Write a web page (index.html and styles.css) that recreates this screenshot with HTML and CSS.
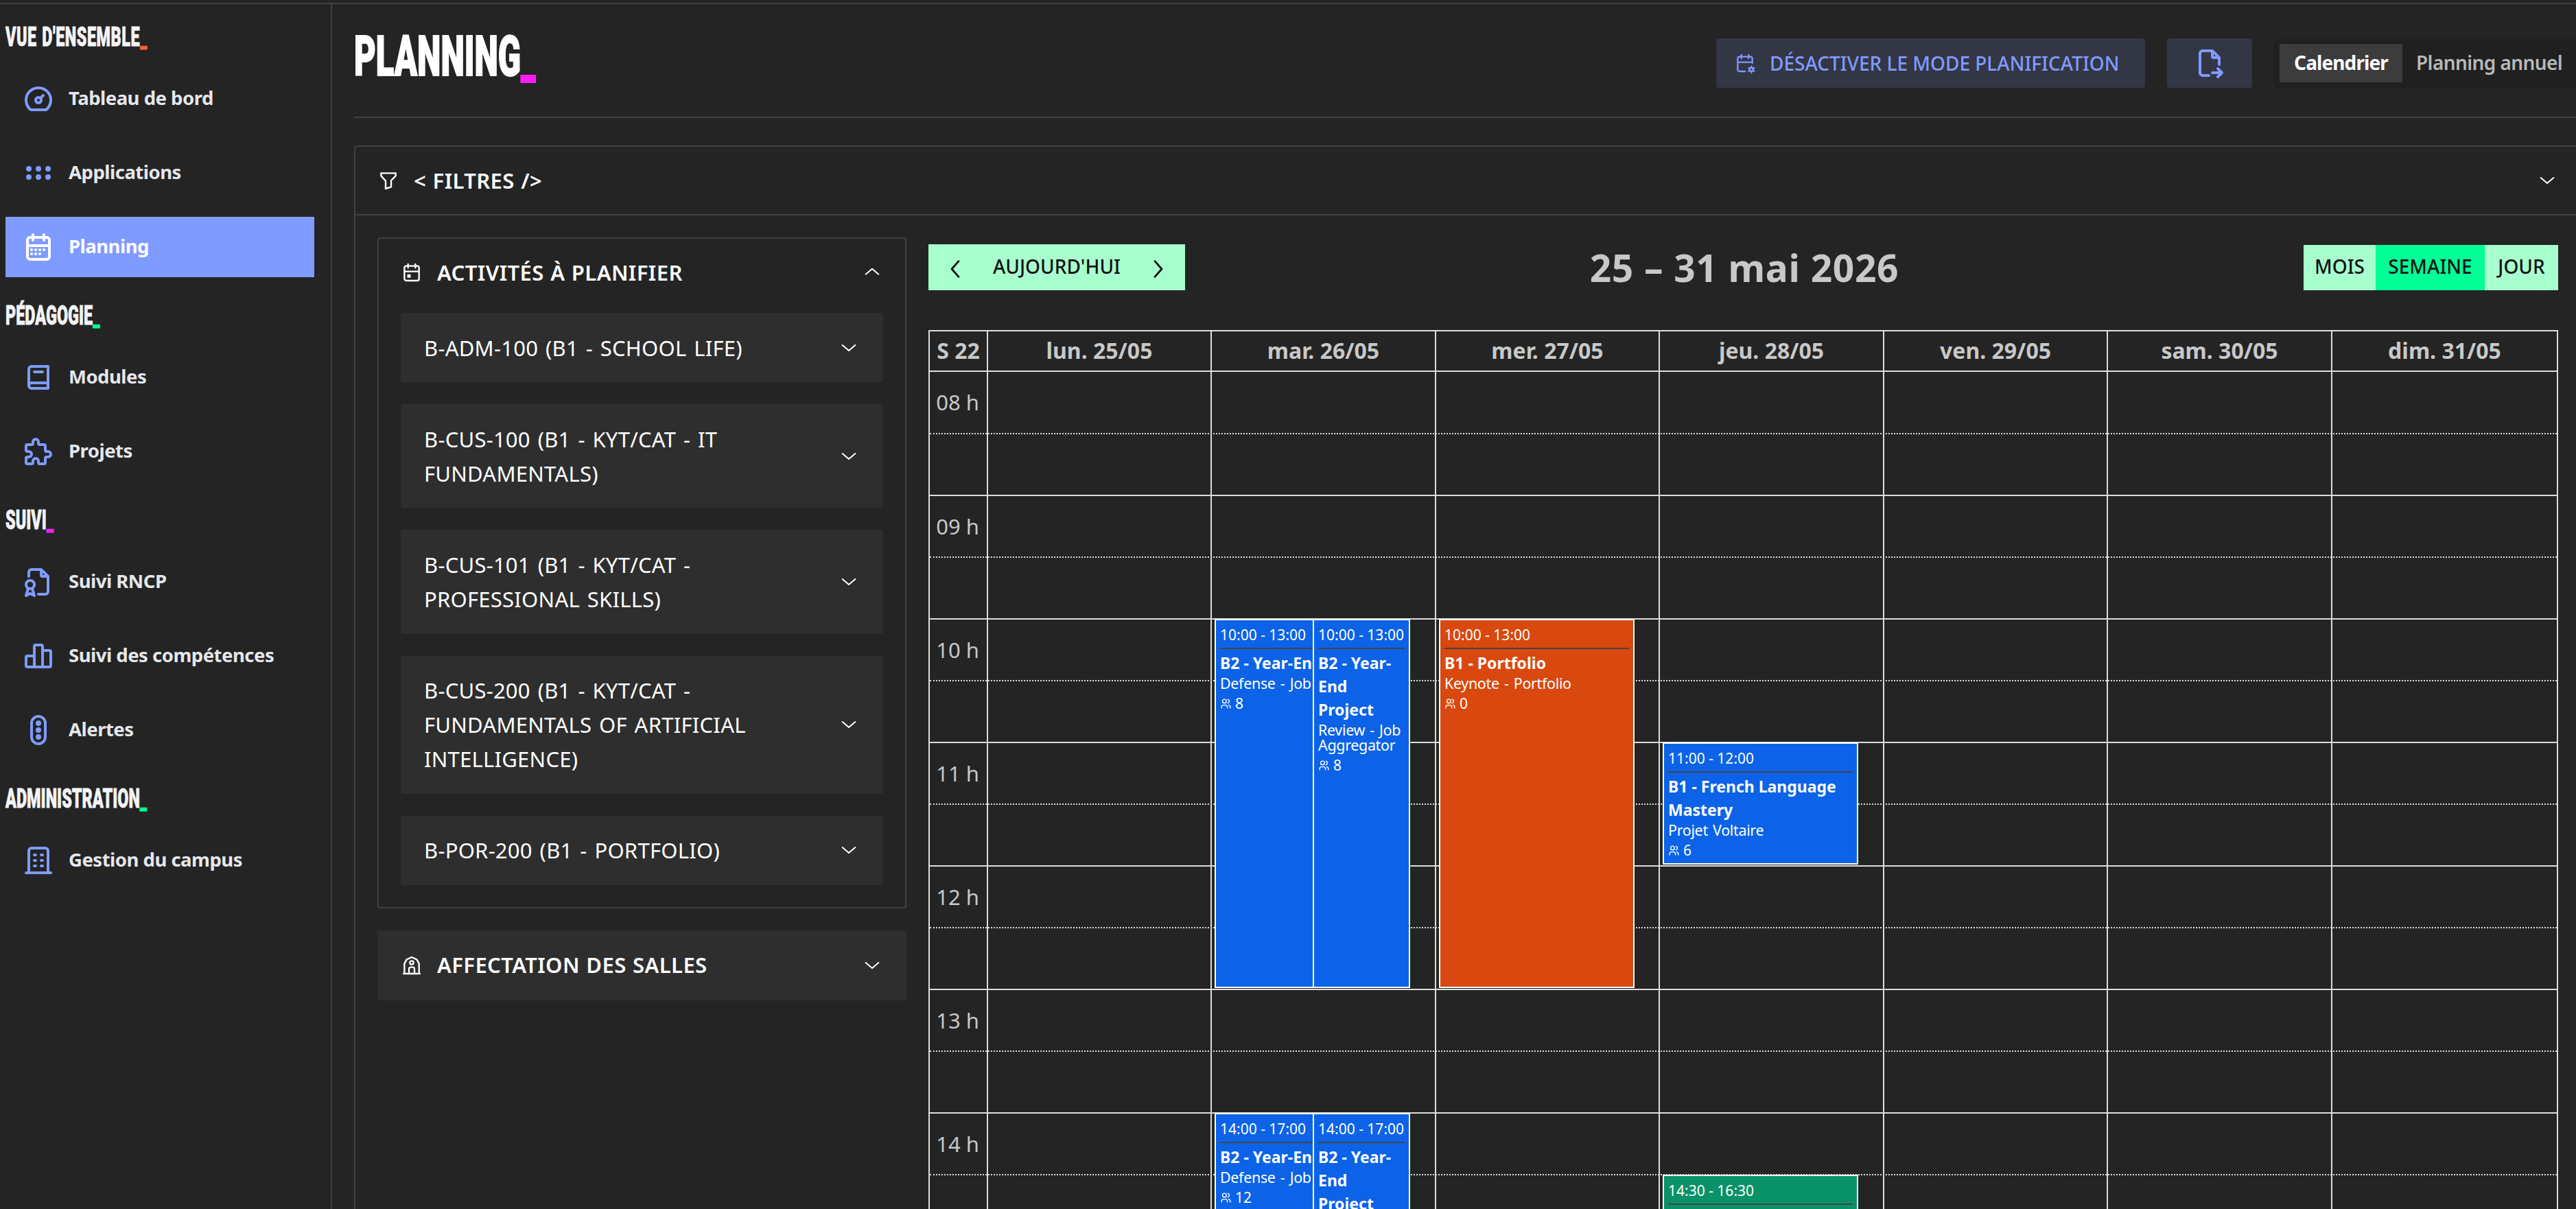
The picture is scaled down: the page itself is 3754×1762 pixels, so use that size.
FILE: index.html
```html
<!DOCTYPE html>
<html lang="fr">
<head>
  <meta charset="UTF-8">
  <title>Planning</title>
  <link rel="stylesheet" href="styles.css">
</head>
<body>
  <!-- Icons -->
  <svg class="sprite">
    <symbol id="i-dashboard" viewBox="0 0 24 24"><circle cx="12" cy="13" r="2"/><path d="M13.45 11.55l2.05-2.05M6.4 20a9 9 0 1 1 11.2 0z"/></symbol>
    <symbol id="i-apps" viewBox="0 0 24 24"><circle cx="5" cy="9" r="1"/><circle cx="5" cy="15" r="1"/><circle cx="12" cy="9" r="1"/><circle cx="12" cy="15" r="1"/><circle cx="19" cy="9" r="1"/><circle cx="19" cy="15" r="1"/></symbol>
    <symbol id="i-month" viewBox="0 0 24 24"><path d="M4 7a2 2 0 0 1 2-2h12a2 2 0 0 1 2 2v12a2 2 0 0 1-2 2H6a2 2 0 0 1-2-2zM16 3v4M8 3v4M4 11h16M7 14h.01M10 14h.01M13 14h.01M16 14h.01M13 17h.01M7 17h.01M10 17h.01"/></symbol>
    <symbol id="i-book" viewBox="0 0 24 24"><path d="M19 4v16H7a2 2 0 0 1-2-2V6a2 2 0 0 1 2-2zM19 16H7a2 2 0 0 0-2 2M9 8h6"/></symbol>
    <symbol id="i-puzzle" viewBox="0 0 24 24"><path d="M4 7h3a1 1 0 0 0 1-1v-1a2 2 0 0 1 4 0v1a1 1 0 0 0 1 1h3a1 1 0 0 1 1 1v3a1 1 0 0 0 1 1h1a2 2 0 0 1 0 4h-1a1 1 0 0 0-1 1v3a1 1 0 0 1-1 1h-3a1 1 0 0 1-1-1v-1a2 2 0 0 0-4 0v1a1 1 0 0 1-1 1H4a1 1 0 0 1-1-1v-3a1 1 0 0 1 1-1h1a2 2 0 0 0 0-4H4a1 1 0 0 1-1-1V8a1 1 0 0 1 1-1"/></symbol>
    <symbol id="i-certificate" viewBox="0 0 24 24"><path d="M14 3v4a1 1 0 0 0 1 1h4M5 8V5a2 2 0 0 1 2-2h7l5 5v11a2 2 0 0 1-2 2h-5M4.500 17L3 22l3-1.500l3 1.500-1.500-5"/><circle cx="6" cy="14" r="3"/></symbol>
    <symbol id="i-chart" viewBox="0 0 24 24"><path d="M3 13a1 1 0 0 1 1-1h4a1 1 0 0 1 1 1v6a1 1 0 0 1-1 1H4a1 1 0 0 1-1-1zM15 9a1 1 0 0 1 1-1h4a1 1 0 0 1 1 1v10a1 1 0 0 1-1 1h-4a1 1 0 0 1-1-1zM9 5a1 1 0 0 1 1-1h4a1 1 0 0 1 1 1v14a1 1 0 0 1-1 1h-4a1 1 0 0 1-1-1zM4 20h14"/></symbol>
    <symbol id="i-lights" viewBox="0 0 24 24"><path d="M7 7a5 5 0 0 1 10 0v10a5 5 0 0 1-10 0z"/><circle cx="12" cy="7" r="1"/><circle cx="12" cy="12" r="1"/><circle cx="12" cy="17" r="1"/></symbol>
    <symbol id="i-building" viewBox="0 0 24 24"><path d="M3 21h18M9 8h1M9 12h1M9 16h1M14 8h1M14 12h1M14 16h1M5 21V5a2 2 0 0 1 2-2h10a2 2 0 0 1 2 2v16"/></symbol>
    <symbol id="i-calcog" viewBox="0 0 24 24"><path d="M12 21H6a2 2 0 0 1-2-2V7a2 2 0 0 1 2-2h12a2 2 0 0 1 2 2v5M16 3v4M8 3v4M4 11h16M19 15.500v1.500M19 21v1.500M22.030 17.250l-1.300.750M17.270 20l-1.300.750M15.970 17.250l1.300.750M20.730 20l1.300.750"/><circle cx="19" cy="19" r="2"/></symbol>
    <symbol id="i-export" viewBox="0 0 24 24"><path d="M14 3v4a1 1 0 0 0 1 1h4M11.500 21H7a2 2 0 0 1-2-2V5a2 2 0 0 1 2-2h7l5 5v5M14 19h7M18 16l3 3-3 3"/></symbol>
    <symbol id="i-filter" viewBox="0 0 24 24"><path d="M4 4h16v2.172a2 2 0 0 1-.586 1.414L15 12v7l-6 2v-8.500L4.520 7.572A2 2 0 0 1 4 6.227z"/></symbol>
    <symbol id="i-event" viewBox="0 0 24 24"><path d="M4 7a2 2 0 0 1 2-2h12a2 2 0 0 1 2 2v12a2 2 0 0 1-2 2H6a2 2 0 0 1-2-2zM16 3v4M8 3v4M4 11h16M8 15h2v2H8z"/></symbol>
    <symbol id="i-cottage" viewBox="0 0 24 24"><path d="M3 21h18M4 21V10l2.500-4.500L12 3l5.500 2.500L20 10v11M9 21v-5a2 2 0 0 1 2-2h2a2 2 0 0 1 2 2v5"/><circle cx="12" cy="9" r="2"/></symbol>
    <symbol id="i-users" viewBox="0 0 24 24"><circle cx="9" cy="7" r="4"/><path d="M3 21v-2a4 4 0 0 1 4-4h4a4 4 0 0 1 4 4v2M16 3.130a4 4 0 0 1 0 7.750M21 21v-2a4 4 0 0 0-3-3.850"/></symbol>
    <symbol id="i-down" viewBox="0 0 24 24"><path d="M5 9l7 6 7-6"/></symbol>
    <symbol id="i-up" viewBox="0 0 24 24"><path d="M5 14l7-6 7 6"/></symbol>
    <symbol id="i-left" viewBox="0 0 24 24"><path d="M15.500 4l-7 8 7 8"/></symbol>
    <symbol id="i-right" viewBox="0 0 24 24"><path d="M8.500 4l7 8-7 8"/></symbol>
  </svg>

  <div class="app">
    <aside class="sidebar">
      <h3 class="nav-title"><span class="spaced">VUE D'ENSEMBLE<i class="orange">_</i></span></h3>
      <nav class="nav">
        <a class="nav-item"><svg><use href="#i-dashboard"/></svg><span>Tableau de bord</span></a>
        <a class="nav-item"><svg><use href="#i-apps"/></svg><span>Applications</span></a>
        <a class="nav-item active"><svg><use href="#i-month"/></svg><span>Planning</span></a>
      </nav>
      <h3 class="nav-title"><span>PÉDAGOGIE<i class="green">_</i></span></h3>
      <nav class="nav">
        <a class="nav-item"><svg><use href="#i-book"/></svg><span>Modules</span></a>
        <a class="nav-item"><svg><use href="#i-puzzle"/></svg><span>Projets</span></a>
      </nav>
      <h3 class="nav-title"><span>SUIVI<i class="pink">_</i></span></h3>
      <nav class="nav">
        <a class="nav-item"><svg><use href="#i-certificate"/></svg><span>Suivi RNCP</span></a>
        <a class="nav-item"><svg><use href="#i-chart"/></svg><span>Suivi des compétences</span></a>
        <a class="nav-item"><svg><use href="#i-lights"/></svg><span>Alertes</span></a>
      </nav>
      <h3 class="nav-title"><span>ADMINISTRATION<i class="green">_</i></span></h3>
      <nav class="nav">
        <a class="nav-item"><svg><use href="#i-building"/></svg><span>Gestion du campus</span></a>
      </nav>
    </aside>

    <main class="main">
      <header class="page-header">
        <h1><span>PLANNING<i class="pink">_</i></span></h1>
        <div class="actions">
          <button class="btn btn-plan"><svg><use href="#i-calcog"/></svg><span>DÉSACTIVER LE MODE PLANIFICATION</span></button>
          <button class="btn btn-export"><svg><use href="#i-export"/></svg></button>
          <div class="switch">
            <span class="switch-item on">Calendrier</span>
            <span class="switch-item">Planning annuel</span>
          </div>
        </div>
      </header>

      <section class="panel">
        <div class="filters">
          <svg class="icon"><use href="#i-filter"/></svg>
          <span class="panel-label">&lt; FILTRES /&gt;</span>
          <svg class="chevron"><use href="#i-down"/></svg>
        </div>
        <div class="content">
          <div class="side">
            <div class="box">
              <div class="box-head">
                <svg class="icon"><use href="#i-event"/></svg>
                <span class="panel-label">ACTIVITÉS À PLANIFIER</span>
                <svg class="chevron"><use href="#i-up"/></svg>
              </div>
              <div class="modules">
                <div class="module"><span>B-ADM-100 (B1 - SCHOOL LIFE)</span><svg class="chevron"><use href="#i-down"/></svg></div>
                <div class="module"><span>B-CUS-100 (B1 - KYT/CAT - IT<br>FUNDAMENTALS)</span><svg class="chevron"><use href="#i-down"/></svg></div>
                <div class="module"><span>B-CUS-101 (B1 - KYT/CAT -<br>PROFESSIONAL SKILLS)</span><svg class="chevron"><use href="#i-down"/></svg></div>
                <div class="module"><span>B-CUS-200 (B1 - KYT/CAT -<br>FUNDAMENTALS OF ARTIFICIAL<br>INTELLIGENCE)</span><svg class="chevron"><use href="#i-down"/></svg></div>
                <div class="module"><span>B-POR-200 (B1 - PORTFOLIO)</span><svg class="chevron"><use href="#i-down"/></svg></div>
              </div>
            </div>
            <div class="rooms">
              <svg class="icon"><use href="#i-cottage"/></svg>
              <span class="panel-label">AFFECTATION DES SALLES</span>
              <svg class="chevron"><use href="#i-down"/></svg>
            </div>
          </div>

          <div class="calendar">
            <div class="toolbar">
              <div class="today">
                <svg><use href="#i-left"/></svg><span>AUJOURD'HUI</span><svg><use href="#i-right"/></svg>
              </div>
              <h2>25 – 31 mai 2026</h2>
              <div class="views">
                <span class="view mois">MOIS</span><span class="view semaine">SEMAINE</span><span class="view jour">JOUR</span>
              </div>
            </div>
            <div class="week">
              <div class="week-head">
                <span>S 22</span><span>lun. 25/05</span><span>mar. 26/05</span><span>mer. 27/05</span><span>jeu. 28/05</span><span>ven. 29/05</span><span>sam. 30/05</span><span>dim. 31/05</span>
              </div>
              <div class="week-body">
                <div class="slot"><span>08 h</span></div>
                <div class="slot half"></div>
                <div class="slot"><span>09 h</span></div>
                <div class="slot half"></div>
                <div class="slot"><span>10 h</span></div>
                <div class="slot half"></div>
                <div class="slot"><span>11 h</span></div>
                <div class="slot half"></div>
                <div class="slot"><span>12 h</span></div>
                <div class="slot half"></div>
                <div class="slot"><span>13 h</span></div>
                <div class="slot half"></div>
                <div class="slot"><span>14 h</span></div>
                <div class="slot half"></div>
                <div class="days">
                  <div class="day"></div>
                  <div class="day">
                    <div class="event blue under" style="top: 362px; height: 538px">
                      <div class="time">10:00 - 13:00</div>
                      <div class="title">B2 - Year-End Project</div>
                      <div class="sub">Defense - Job Aggregator</div>
                      <div class="count"><svg><use href="#i-users"/></svg><span>8</span></div>
                    </div>
                    <div class="event blue over" style="top: 362px; height: 538px">
                      <div class="time">10:00 - 13:00</div>
                      <div class="title">B2 - Year-<br>End<br>Project</div>
                      <div class="sub">Review - Job<br>Aggregator</div>
                      <div class="count"><svg><use href="#i-users"/></svg><span>8</span></div>
                    </div>
                    <div class="event blue under" style="top: 1082px; height: 538px">
                      <div class="time">14:00 - 17:00</div>
                      <div class="title">B2 - Year-End Project</div>
                      <div class="sub">Defense - Job Aggregator</div>
                      <div class="count"><svg><use href="#i-users"/></svg><span>12</span></div>
                    </div>
                    <div class="event blue over" style="top: 1082px; height: 538px">
                      <div class="time">14:00 - 17:00</div>
                      <div class="title">B2 - Year-<br>End<br>Project</div>
                    </div>
                  </div>
                  <div class="day">
                    <div class="event red" style="top: 362px; height: 538px">
                      <div class="time">10:00 - 13:00</div>
                      <div class="title">B1 - Portfolio</div>
                      <div class="sub">Keynote - Portfolio</div>
                      <div class="count"><svg><use href="#i-users"/></svg><span>0</span></div>
                    </div>
                  </div>
                  <div class="day">
                    <div class="event blue" style="top: 542px; height: 178px">
                      <div class="time">11:00 - 12:00</div>
                      <div class="title">B1 - French Language<br>Mastery</div>
                      <div class="sub">Projet Voltaire</div>
                      <div class="count"><svg><use href="#i-users"/></svg><span>6</span></div>
                    </div>
                    <div class="event teal" style="top: 1172px; height: 358px">
                      <div class="time">14:30 - 16:30</div>
                    </div>
                  </div>
                  <div class="day"></div>
                  <div class="day"></div>
                  <div class="day"></div>
                </div>
              </div>
            </div>
          </div>
        </div>
      </section>
    </main>
  </div>
</body>
</html>
```
FILE: styles.css
```css
* {
  box-sizing: border-box;
}
body {
  margin: 0;
  padding-top: 4px;
  height: 1762px;
  overflow: hidden;
  background: #242424;
  color: #fff;
  font-family: 'Noto Sans', 'Open Sans', sans-serif;
  font-size: 31px;
}
h1, h2, h3 {
  margin: 0;
}
svg {
  fill: none;
  stroke: currentColor;
  stroke-width: 2;
  stroke-linecap: round;
  stroke-linejoin: round;
  flex-shrink: 0;
}
button {
  border: 0;
  font: inherit;
}
i {
  font-style: normal;
}
.sprite {
  display: none;
}
.orange {
  color: #ff5f3a;
}
.green {
  color: #00ff97;
}
.pink {
  color: #ff1ef7;
}
.app {
  display: flex;
  height: 1758px;
  overflow: hidden;
  border-top: 2px solid #404040;
}

/* Sidebar */
.sidebar {
  width: 484px;
  flex-shrink: 0;
  padding: 0 24px 0 8px;
  border-right: 2px solid #404040;
}
.nav-title {
  display: flex;
  align-items: center;
  height: 102px;
  padding-top: 10px;
  font-family: Roboto, sans-serif;
  font-weight: 900;
  font-size: 39px;
  line-height: 46px;
  color: #f3f4f6;
  -webkit-text-stroke: 0.8px;
}
.nav-title:first-child {
  height: 94px;
  padding-top: 2px;
}
.nav-title span {
  white-space: nowrap;
  transform: scaleX(0.6);
  transform-origin: left;
}
.nav-title .spaced {
  word-spacing: 2px;
  letter-spacing: 0.9px;
}
.nav {
  display: flex;
  flex-direction: column;
  gap: 20px;
}
.nav-item {
  display: flex;
  align-items: center;
  gap: 20px;
  height: 88px;
  padding-left: 24px;
  font-weight: 700;
  font-size: 27.5px;
  letter-spacing: -0.5px;
  color: #e5e7eb;
}
.nav-item svg {
  width: 48px;
  height: 48px;
  color: #809bff;
}
.nav-item span {
  padding-bottom: 3px;
}
.nav-item.active {
  width: 450px;
  background: #809bff;
}
.nav-item.active, .nav-item.active svg {
  color: #fff;
}

/* Header */
.main {
  width: 3270px;
  padding-left: 32px;
}
.page-header {
  display: flex;
  justify-content: space-between;
  height: 166px;
  border-bottom: 2px solid #404040;
}
h1 {
  padding-top: 28px;
  font-family: Roboto, sans-serif;
  font-weight: 900;
  font-size: 82px;
  line-height: 96px;
  -webkit-text-stroke: 2px;
}
h1 span {
  display: inline-block;
  transform: scaleX(0.596);
  transform-origin: left;
}
.actions {
  display: flex;
  gap: 32px;
  height: 72px;
  margin-top: 50px;
}
.btn {
  display: flex;
  align-items: center;
  justify-content: center;
  padding: 0;
  border-radius: 4px;
  background: #333645;
  color: #809bff;
}
.btn-plan {
  width: 625px;
  justify-content: flex-start;
  gap: 20px;
  padding-left: 26px;
  font-size: 28px;
  font-weight: 500;
}
.btn-plan svg {
  width: 32px;
  height: 32px;
  stroke-width: 1.7;
}
.btn-plan span {
  padding-bottom: 1px;
}
.btn-export {
  width: 124px;
}
.btn-export svg {
  width: 48px;
  height: 48px;
}
.switch {
  display: flex;
  width: 440px;
  padding: 8px 0 8px 8px;
  border-radius: 4px 0 0 4px;
  background: #202020;
  font-size: 28px;
  font-weight: 600;
  letter-spacing: -0.6px;
}
.switch-item {
  padding-left: 20px;
  line-height: 55px;
  white-space: nowrap;
  color: #b8b8b8;
}
.switch-item.on {
  width: 179px;
  padding: 0;
  text-align: center;
  font-weight: 700;
  letter-spacing: -0.9px;
  background: #3c3c3c;
  color: #fff;
}

/* Panel */
.panel {
  height: 1550px;
  margin-top: 40px;
  overflow: hidden;
  border: 2px solid #404040;
  border-right: 0;
  border-bottom: 0;
  border-radius: 4px 0 0 0;
}
.icon {
  width: 32px;
  height: 32px;
  stroke-width: 1.8;
}
.chevron {
  width: 32px;
  height: 32px;
  margin-left: auto;
  stroke-width: 1.5;
}
.panel-label {
  padding-bottom: 1px;
  font-size: 31px;
  font-weight: 600;
  letter-spacing: 0.4px;
  word-spacing: 1px;
}
.filters {
  display: flex;
  align-items: center;
  gap: 21px;
  height: 100px;
  padding: 0 26px 0 32px;
  border-bottom: 2px solid #404040;
}
.content {
  display: flex;
  gap: 32px;
  padding: 32px 26px 0 32px;
}
.side {
  width: 771px;
  flex-shrink: 0;
}
.box {
  padding: 0 32px 32px;
  border: 2px solid #404040;
  border-radius: 4px;
}
.box-head {
  display: flex;
  align-items: center;
  gap: 21px;
  height: 108px;
  padding-bottom: 10px;
}
.modules {
  display: flex;
  flex-direction: column;
  gap: 32px;
}
.module {
  display: flex;
  align-items: center;
  padding: 25.6px 34px;
  border-radius: 4px;
  background: #2e2e2e;
  line-height: 50px;
  letter-spacing: 0.25px;
  word-spacing: 2.5px;
}
.rooms {
  display: flex;
  align-items: center;
  gap: 21px;
  height: 102px;
  margin-top: 32px;
  padding: 0 34px;
  border-radius: 4px;
  background: #2e2e2e;
}

/* Calendar */
.calendar {
  flex: 1;
}
.toolbar {
  display: flex;
  align-items: center;
  justify-content: space-between;
  height: 67px;
  margin-top: 10px;
  color: #111;
}
.today {
  display: flex;
  align-items: center;
  justify-content: space-between;
  width: 374px;
  height: 67px;
  padding: 0 22px;
  background: #a7ffce;
  font-size: 28px;
  font-weight: 500;
}
.today svg {
  width: 34px;
  height: 34px;
  margin-top: 4px;
}
.today span {
  padding-bottom: 3px;
}
h2 {
  font-size: 55px;
  line-height: 67px;
  letter-spacing: 0.7px;
  color: #c8c8c8;
}
.views {
  display: flex;
  height: 66px;
  font-size: 28px;
  font-weight: 500;
}
.view {
  line-height: 63px;
  text-align: center;
  background: #a7ffce;
}
.mois {
  width: 105px;
}
.semaine {
  width: 159px;
  background: #00ff97;
}
.jour {
  width: 107px;
}
.week {
  margin-top: 58px;
  border: 2px solid #ddd;
  color: #c8c8c8;
}
.week-head, .days {
  display: grid;
  grid-template-columns: 326px 327px 326px 327px 326px 327px 1fr;
}
.week-head {
  grid-template-columns: 83px 326px 327px 326px 327px 326px 327px 1fr;
  height: 57px;
}
.week-head span {
  font-weight: 700;
  font-size: 32px;
  line-height: 56px;
  text-align: center;
}
.week-head span + span {
  border-left: 2px solid #ddd;
}
.week-body {
  position: relative;
}
.slot {
  height: 90px;
  border-top: 2px solid #ddd;
}
.slot:first-child {
  height: 91px;
}
.slot.half {
  border-top-style: dotted;
}
.slot span {
  display: block;
  width: 72px;
  line-height: 88px;
  text-align: right;
}
.days {
  position: absolute;
  inset: 0 0 0 83px;
}
.day {
  position: relative;
  border-left: 2px solid #ddd;
}
/* events start on the hour line and leave a gap on the right of the day */
.event {
  position: absolute;
  left: 4px;
  width: 285px;
  padding: 5px 6px;
  overflow: hidden;
  border: 2px solid #fff;
  color: #fff;
  white-space: nowrap;
}
.event.over {
  left: 147px;
  width: 142px;
}
.blue {
  background: #0c63e7;
}
.red {
  background: #d9480f;
}
.teal {
  background: #099268;
}
.time {
  height: 37px;
  border-bottom: 2px solid #444;
  font-size: 21px;
  line-height: 33px;
}
.title {
  margin-top: 3px;
  font-size: 23px;
  font-weight: 700;
  line-height: 34px;
}
.sub {
  margin-top: 2px;
  font-size: 21.5px;
  line-height: 22px;
  letter-spacing: -0.35px;
  word-spacing: 2px;
}
.count {
  display: flex;
  align-items: center;
  gap: 5px;
  height: 22px;
  margin-top: 7px;
  font-size: 21px;
}
.count svg {
  width: 17px;
  height: 17px;
}
```
